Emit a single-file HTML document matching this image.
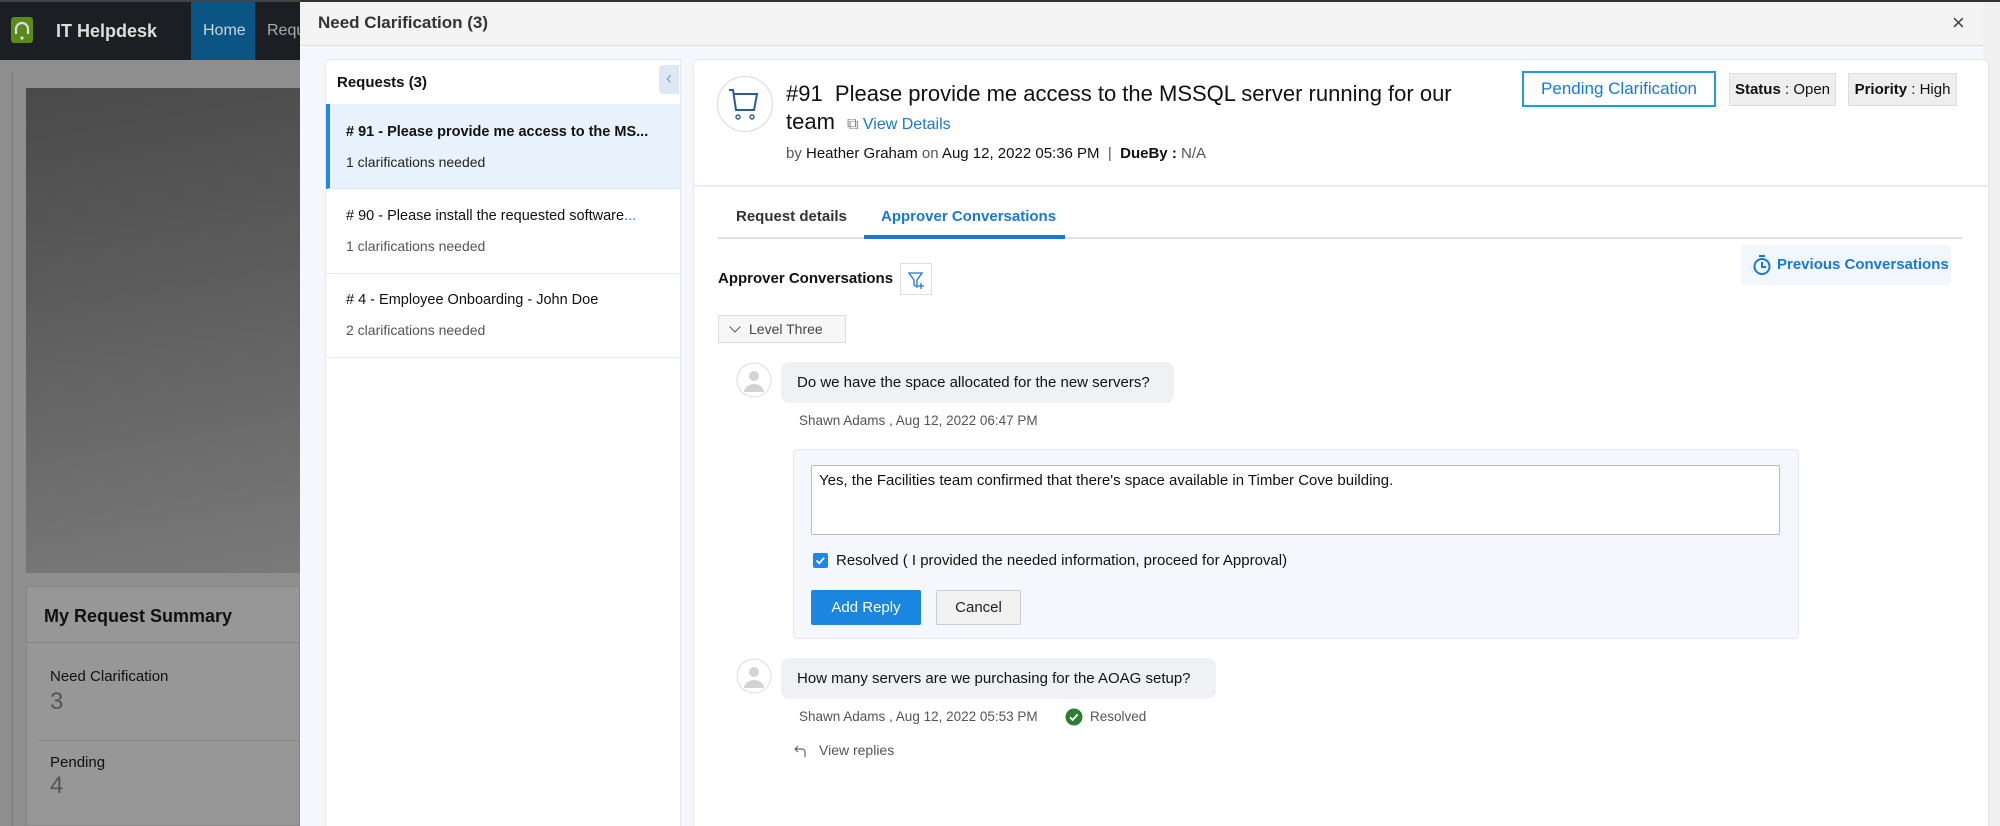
<!DOCTYPE html>
<html><head><meta charset="utf-8">
<style>
*{box-sizing:border-box;margin:0;padding:0}
html,body{width:2000px;height:826px;overflow:hidden}
body{font-family:"Liberation Sans",Arial,sans-serif;background:#8d8d8d;position:relative;color:#111}
.abs{position:absolute}
</style></head><body>
<!-- background app -->
<div class="abs" style="left:0;top:0;width:300px;height:60px;background:#1b1f24"></div>
<div class="abs" style="left:0;top:0;width:300px;height:2px;background:#444"></div>
<div class="abs" style="left:11px;top:17px;width:22px;height:26px;background:#5b8a1c;border-radius:3px"></div>
<svg class="abs" style="left:11px;top:17px" width="22" height="26" viewBox="0 0 22 26"><path d="M5 17V12a6 6 0 0 1 12 0v5" stroke="#ddd" stroke-width="2.2" fill="none"/><circle cx="11" cy="21" r="1.6" fill="#ddd"/></svg>
<div class="abs" style="left:56px;top:21px;color:#ddd;font-size:18px;font-weight:bold">IT Helpdesk</div>
<div class="abs" style="left:191px;top:1px;width:64px;height:59px;background:#0b5585"></div>
<div class="abs" style="left:203px;top:22px;color:#c8d6e0;font-size:16px">Home</div>
<div class="abs" style="left:267px;top:22px;color:#aaa;font-size:16px">Requ</div>
<div class="abs" style="left:0;top:60px;width:300px;height:766px;background:#8e8e8e"></div>
<div class="abs" style="left:12px;top:72px;width:288px;height:754px;border-left:1px solid #7a7a7a"></div>
<div class="abs" style="left:26px;top:88px;width:274px;height:485px;background:linear-gradient(170deg,#4a4a4a 0%,#5c5c5c 40%,#707070 80%,#7a7a7a 100%)"></div>
<div class="abs" style="left:26px;top:586px;width:274px;height:240px;background:#979797;border:1px solid #858585"></div>
<div class="abs" style="left:26px;top:642px;width:274px;height:1px;background:#858585"></div>
<div class="abs" style="left:44px;top:606px;font-size:18px;font-weight:bold;color:#111">My Request Summary</div>
<div class="abs" style="left:50px;top:668px;font-size:15px;color:#111">Need Clarification</div>
<div class="abs" style="left:50px;top:688px;font-size:24px;color:#555">3</div>
<div class="abs" style="left:38px;top:740px;width:262px;height:1px;background:#858585"></div>
<div class="abs" style="left:50px;top:754px;font-size:15px;color:#111">Pending</div>
<div class="abs" style="left:50px;top:772px;font-size:24px;color:#555">4</div>

<!-- modal -->
<div class="abs" style="left:300px;top:0;width:1700px;height:826px;background:#f0f0f0"></div>
<div class="abs" style="left:300px;top:0;width:1683px;height:826px;background:#f5f7fc"></div>
<div class="abs" style="left:300px;top:0;width:1700px;height:2px;background:#333"></div>
<div class="abs" style="left:300px;top:2px;width:1683px;height:44px;background:#f4f4f4;border-bottom:1px solid #ddd"></div>
<div class="abs" style="left:318px;top:13px;font-size:17px;font-weight:bold;color:#333">Need Clarification (3)</div>
<div class="abs" style="left:1952px;top:10px;font-size:22px;color:#444">×</div>

<!-- left list -->
<div class="abs" style="left:325px;top:59px;width:356px;height:767px;background:#fff;border:1px solid #e3e8f3;border-bottom:none;border-radius:6px 0 0 0"></div>
<div class="abs" style="left:337px;top:74px;font-size:15px;font-weight:bold">Requests (3)</div>
<div class="abs" style="left:659px;top:65px;width:20px;height:29px;background:#dce8f6;border-radius:4px 0 0 4px;color:#8aa;font-size:18px;text-align:center;line-height:27px">‹</div>
<div class="abs" style="left:326px;top:104px;width:354px;height:85px;background:#e8f2fc;border-left:4px solid #1e88e5;border-bottom:1px solid #dbe6f3"></div>
<div class="abs" style="left:346px;top:124px;font-size:14.5px;font-weight:bold">#&nbsp;91 - Please provide me access to the MS...</div>
<div class="abs" style="left:346px;top:154px;font-size:14px;color:#222">1 clarifications needed</div>
<div class="abs" style="left:346px;top:208px;font-size:14.5px;color:#111">#&nbsp;90 - Please install the requested software<span style="color:#1e88e5">...</span></div>
<div class="abs" style="left:346px;top:238px;font-size:14px;color:#555">1 clarifications needed</div>
<div class="abs" style="left:326px;top:273px;width:354px;height:1px;background:#e6ebf3"></div>
<div class="abs" style="left:346px;top:292px;font-size:14.5px;color:#111">#&nbsp;4 - Employee Onboarding - John Doe</div>
<div class="abs" style="left:346px;top:322px;font-size:14px;color:#555">2 clarifications needed</div>
<div class="abs" style="left:326px;top:357px;width:354px;height:1px;background:#e6ebf3"></div>

<!-- right card -->
<div class="abs" style="left:693px;top:59px;width:1296px;height:767px;background:#fff;border:1px solid #e3e8f3;border-bottom:none;border-radius:6px 6px 0 0"></div>
<div class="abs" style="left:694px;top:185px;width:1294px;height:2px;background:#e8edf5"></div>
<svg class="abs" style="left:716px;top:75px" width="58" height="58" viewBox="0 0 58 58"><circle cx="29" cy="29" r="27.5" fill="#fff" stroke="#ddd" stroke-width="1.2"/><path d="M13 15h4l3 20h18l3-16H18" stroke="#2a5a9a" stroke-width="2" fill="none"/><circle cx="22" cy="42" r="2" fill="none" stroke="#2a5a9a" stroke-width="1.4"/><circle cx="36" cy="42" r="2" fill="none" stroke="#2a5a9a" stroke-width="1.4"/></svg>
<div class="abs" style="left:786px;top:80px;font-size:22px;line-height:28px;width:680px;color:#111">#91&nbsp; Please provide me access to the MSSQL server running for our team <span style="font-size:16px;color:#777;margin-left:6px">⧉</span><span style="font-size:16px;color:#1a78d8"> View Details</span></div>
<div class="abs" style="left:786px;top:145px;font-size:15px;color:#111"><span style="color:#555">by</span> Heather Graham <span style="color:#555">on</span> Aug 12, 2022 05:36 PM &nbsp;<span style="color:#555">|</span>&nbsp; <b>DueBy :</b> <span style="color:#555">N/A</span></div>
<div class="abs" style="left:1522px;top:71px;width:194px;height:36px;border:2px solid #2196f3;color:#1a78d8;font-size:17px;text-align:center;line-height:32px">Pending Clarification</div>
<div class="abs" style="left:1729px;top:73px;width:107px;height:33px;background:#eee;border:1px solid #ddd;font-size:15px;text-align:center;line-height:31px"><b>Status</b> : Open</div>
<div class="abs" style="left:1848px;top:73px;width:109px;height:33px;background:#eee;border:1px solid #ddd;font-size:15px;text-align:center;line-height:31px"><b>Priority</b> : High</div>

<!-- tabs -->
<div class="abs" style="left:718px;top:237px;width:1244px;height:2px;background:#e2e2e2"></div>
<div class="abs" style="left:736px;top:208px;font-size:15px;font-weight:bold;color:#333">Request details</div>
<div class="abs" style="left:881px;top:208px;font-size:15px;font-weight:bold;color:#1a78d8">Approver Conversations</div>
<div class="abs" style="left:864px;top:235px;width:201px;height:4px;background:#1a78d8"></div>

<div class="abs" style="left:718px;top:270px;font-size:15px;font-weight:bold">Approver Conversations</div>
<div class="abs" style="left:900px;top:263px;width:32px;height:32px;border:1px solid #ddd;background:#fff"></div>
<svg class="abs" style="left:900px;top:263px" width="32" height="32" viewBox="0 0 32 32"><path d="M9 10h13l-5 7v7l-3-2v-5z" stroke="#1a78d8" stroke-width="1.3" fill="none"/><path d="M21 20v6M18 23h6" stroke="#1a78d8" stroke-width="1.3"/></svg>
<div class="abs" style="left:1741px;top:245px;width:210px;height:40px;background:#f2f6fd;border-radius:4px"></div>
<svg class="abs" style="left:1752px;top:254px" width="20" height="22" viewBox="0 0 20 22"><circle cx="10" cy="12.5" r="7.5" fill="none" stroke="#1a78d8" stroke-width="2"/><path d="M7 2h6M10 8v5h4" stroke="#1a78d8" stroke-width="2" fill="none"/></svg>
<div class="abs" style="left:1777px;top:256px;font-size:15px;font-weight:bold;color:#1a78d8">Previous Conversations</div>

<div class="abs" style="left:718px;top:315px;width:128px;height:28px;background:#f7f7f7;border:1px solid #ddd;font-size:14px;color:#444;line-height:26px;padding-left:12px"><span style="display:inline-block;width:8px;height:8px;border-right:1.3px solid #555;border-bottom:1.3px solid #555;transform:rotate(45deg);margin-right:10px;position:relative;top:-3px"></span>Level Three</div>

<!-- msg 1 -->
<svg class="abs" style="left:736px;top:362px" width="36" height="36" viewBox="0 0 36 36"><circle cx="18" cy="18" r="17" fill="#fff" stroke="#ddd"/><circle cx="18" cy="14" r="5" fill="#d3d3d3"/><path d="M8 30a10 8 0 0 1 20 0" fill="#d3d3d3"/></svg>
<div class="abs" style="left:781px;top:362px;width:393px;height:41px;background:#f0f1f5;border-radius:8px;font-size:15px;line-height:41px;padding-left:16px;color:#111">Do we have the space allocated for the new servers?</div>
<div class="abs" style="left:799px;top:413px;font-size:13.5px;color:#555">Shawn Adams , Aug 12, 2022 06:47 PM</div>

<div class="abs" style="left:793px;top:449px;width:1006px;height:190px;background:#f5f7fd;border:1px solid #e2e8f5;border-radius:4px"></div>
<div class="abs" style="left:811px;top:465px;width:969px;height:70px;background:#fff;border:1px solid #bbb;border-radius:2px;font-size:15px;padding:6px 7px;color:#111">Yes, the Facilities team confirmed that there's space available in Timber Cove building.</div>
<div class="abs" style="left:813px;top:553px;width:15px;height:15px;background:#1e88e5;border-radius:2px"></div>
<svg class="abs" style="left:813px;top:553px" width="15" height="15" viewBox="0 0 15 15"><path d="M3.5 7.5l2.7 2.7 5-5.5" stroke="#fff" stroke-width="1.8" fill="none"/></svg>
<div class="abs" style="left:836px;top:552px;font-size:15px;color:#111">Resolved ( I provided the needed information, proceed for Approval)</div>
<div class="abs" style="left:811px;top:590px;width:110px;height:35px;background:#1a86df;border-radius:2px;color:#fff;font-size:15px;text-align:center;line-height:35px">Add Reply</div>
<div class="abs" style="left:936px;top:590px;width:85px;height:35px;background:#f1f1f1;border:1px solid #ccc;border-radius:2px;color:#222;font-size:15px;text-align:center;line-height:33px">Cancel</div>

<!-- msg 2 -->
<svg class="abs" style="left:736px;top:658px" width="36" height="36" viewBox="0 0 36 36"><circle cx="18" cy="18" r="17" fill="#fff" stroke="#ddd"/><circle cx="18" cy="14" r="5" fill="#d3d3d3"/><path d="M8 30a10 8 0 0 1 20 0" fill="#d3d3d3"/></svg>
<div class="abs" style="left:781px;top:658px;width:435px;height:41px;background:#f0f1f5;border-radius:8px;font-size:15px;line-height:41px;padding-left:16px;color:#111">How many servers are we purchasing for the AOAG setup?</div>
<div class="abs" style="left:799px;top:709px;font-size:13.5px;color:#555">Shawn Adams , Aug 12, 2022 05:53 PM</div>
<svg class="abs" style="left:1065px;top:708px" width="18" height="18" viewBox="0 0 18 18"><circle cx="9" cy="9" r="8.5" fill="#2e7d32"/><path d="M5 9.2l2.7 2.7 5-5.5" stroke="#fff" stroke-width="1.8" fill="none"/></svg>
<div class="abs" style="left:1090px;top:709px;font-size:13.5px;color:#555">Resolved</div>
<svg class="abs" style="left:793px;top:743px" width="16" height="16" viewBox="0 0 16 16"><path d="M5 3L2 6l3 3M2 6h7a3 3 0 0 1 3 3v5" stroke="#666" stroke-width="1.2" fill="none"/></svg>
<div class="abs" style="left:819px;top:742px;font-size:14px;color:#555">View replies</div>
</body></html>
